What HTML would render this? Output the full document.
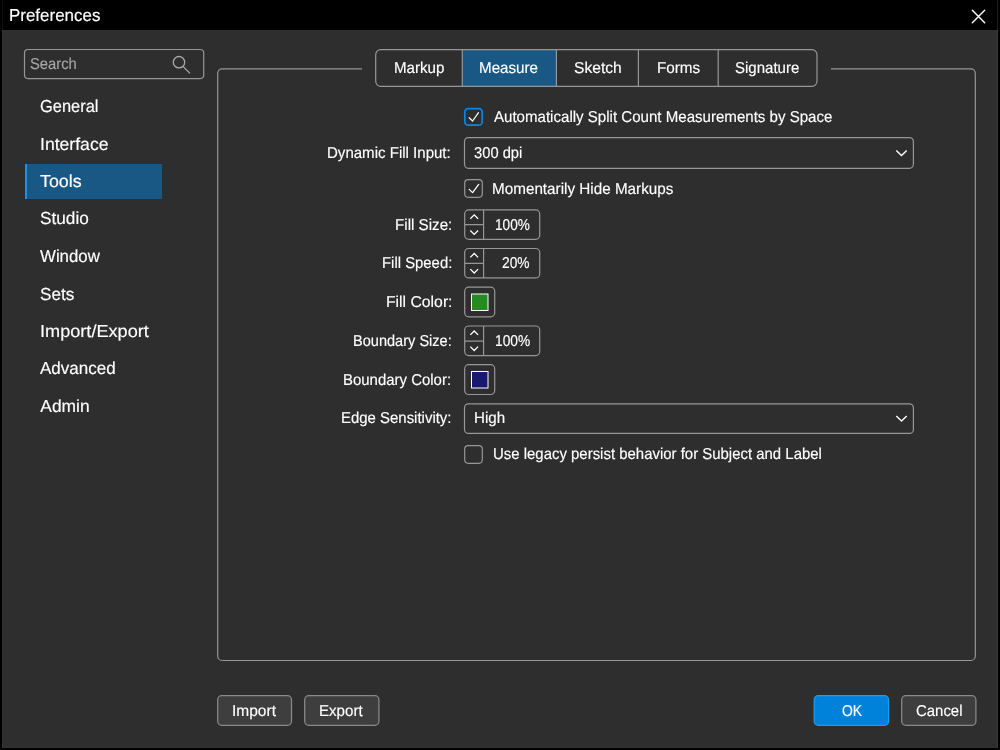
<!DOCTYPE html>
<html><head><meta charset="utf-8">
<style>
*{margin:0;padding:0;box-sizing:border-box}
html,body{width:1000px;height:750px;overflow:hidden;background:#000}
body{position:relative;font-family:"Liberation Sans",sans-serif}
.a{position:absolute}
.t{position:absolute;white-space:nowrap;line-height:1;transform-origin:0 0;filter:grayscale(1);text-rendering:geometricPrecision;-webkit-text-stroke:0.15px currentColor}
svg{position:absolute;left:0;top:0;overflow:visible}
</style></head><body>
<div class="a" style="left:2px;top:30px;width:996px;height:718px;background:#2e2e2e"></div>
<div class="a" style="left:997px;top:30px;width:1px;height:718px;background:#3a3a3a"></div>
<div class="a" style="left:997px;top:0;width:1px;height:30px;background:#1c1c1c"></div>
<div class="a" style="left:2px;top:0;width:1px;height:30px;background:#101010"></div>
<div class="a" style="left:2px;top:30px;width:1px;height:718px;background:#333"></div>
<div class="a" style="left:2px;top:747px;width:996px;height:1px;background:#333"></div>
<svg width="1000" height="750">
<g fill="none" stroke-linecap="round">
<path d="M972.3 10.3L984.7 22.7M984.7 10.3L972.3 22.7" stroke="#fff" stroke-width="1.4"/>
</g>
<g fill="none" stroke="#979797" stroke-width="1.2">
<!-- search -->
<rect x="24.5" y="49.5" width="179.2" height="29.1" rx="3.5"/>
<!-- group -->
<rect x="217.7" y="68.8" width="757.6" height="591.7" rx="4.5"/>
</g>
<rect x="362" y="66" width="469" height="5" fill="#2e2e2e"/>
<!-- search icon -->
<g fill="none" stroke="#a8a8a8" stroke-width="1.3">
<circle cx="179" cy="62.2" r="5.7"/>
<path d="M183.2 66.6L190 73.4"/>
</g>
<!-- nav highlight -->
<rect x="25" y="164" width="137" height="35" fill="#195784"/>
<rect x="25" y="164" width="2" height="35" fill="#1e90e6"/>
<!-- tabs -->
<rect x="462.5" y="49.5" width="94" height="37" fill="#195784"/>
<g fill="none" stroke="#979797" stroke-width="1.2">
<rect x="375.7" y="49.7" width="441.3" height="36.6" rx="5"/>
<path d="M462.3 49.7V86.3M556.4 49.7V86.3M638.4 49.7V86.3M718.2 49.7V86.3"/>
</g>
<!-- checkboxes -->
<rect x="464.8" y="108.7" width="17.4" height="16.5" rx="3.5" fill="none" stroke="#0d86e0" stroke-width="1.7"/>
<path d="M469.2 117.8L472.6 121L478.5 112.7" fill="none" stroke="#fff" stroke-width="1.25" stroke-linecap="round" stroke-linejoin="round"/>
<g fill="none" stroke="#979797" stroke-width="1.2">
<rect x="464.7" y="179.7" width="17.6" height="17.6" rx="3.5"/>
<rect x="464.7" y="445.7" width="17.6" height="17.6" rx="3.5"/>
</g>
<path d="M469.2 189.4L472.6 192.6L478.7 184.4" fill="none" stroke="#fff" stroke-width="1.25" stroke-linecap="round" stroke-linejoin="round"/>
<!-- dropdowns -->
<g fill="none" stroke="#979797" stroke-width="1.2">
<rect x="464.5" y="137.6" width="448.9" height="30.7" rx="4"/>
<rect x="464.5" y="403.8" width="448.9" height="29.6" rx="4"/>
</g>
<g fill="none" stroke="#fff" stroke-width="1.4" stroke-linecap="butt" stroke-linejoin="miter">
<path d="M896.3 150.6L901.5 155.6L906.7 150.6"/>
<path d="M896.3 416L901.5 421L906.7 416"/>
</g>
<!-- spinboxes -->
<g fill="none" stroke="#979797" stroke-width="1.2">
<rect x="464.7" y="209.9" width="75" height="29.4" rx="4"/>
<path d="M483.6 209.9V239.3M464.7 224.7H483.6"/>
<rect x="464.7" y="248.5" width="75" height="29.4" rx="4"/>
<path d="M483.6 248.5V277.9M464.7 263.3H483.6"/>
<rect x="464.7" y="326" width="75" height="29.6" rx="4"/>
<path d="M483.6 326V355.6M464.7 341.1H483.6"/>
</g>
<g fill="none" stroke="#fff" stroke-width="1.3" stroke-linecap="butt" stroke-linejoin="miter">
<path d="M470.3 218.8L474.2 214.9L478.1 218.8M470.3 230.5L474.2 234.4L478.1 230.5"/>
<path d="M470.3 257.4L474.2 253.5L478.1 257.4M470.3 269.1L474.2 273L478.1 269.1"/>
<path d="M470.3 334.9L474.2 331L478.1 334.9M470.3 346.6L474.2 350.5L478.1 346.6"/>
</g>
<!-- color boxes -->
<g fill="none" stroke="#979797" stroke-width="1.2">
<rect x="464.7" y="287.2" width="30" height="29.6" rx="4"/>
<rect x="464.7" y="364.7" width="30" height="29.8" rx="4"/>
</g>
<rect x="471.5" y="294" width="16.5" height="16.5" fill="#228b22" stroke="#fff" stroke-width="1"/>
<rect x="471.5" y="371.5" width="16.5" height="16.5" fill="#191970" stroke="#fff" stroke-width="1"/>
<!-- buttons -->
<g stroke-width="1.25">
<rect x="217.7" y="695.7" width="73.8" height="29.6" rx="4" fill="#3e3e3e" stroke="#8a8a8a"/>
<rect x="304.7" y="695.7" width="74.2" height="29.6" rx="4" fill="#3e3e3e" stroke="#8a8a8a"/>
<rect x="901.7" y="695.7" width="74.2" height="29.6" rx="4" fill="#3e3e3e" stroke="#8a8a8a"/>
<rect x="814.2" y="695.7" width="74.4" height="29.6" rx="4" fill="#0082da" stroke="#14a0fa"/>
</g>
</svg>

<div class="t" style="left:9.02px;top:7.00px;font-size:17.3px;color:#ffffff;transform:scaleX(0.9804)">Preferences</div>
<div class="t" style="left:30.46px;top:56.70px;font-size:15.8px;color:#a6a6a6;transform:scaleX(0.9354)">Search</div>
<div class="t" style="left:39.66px;top:98.00px;font-size:17.4px;color:#ffffff;transform:scaleX(0.9450)">General</div>
<div class="t" style="left:39.59px;top:136.00px;font-size:17.4px;color:#ffffff;transform:scaleX(1.0121)">Interface</div>
<div class="t" style="left:40.20px;top:172.80px;font-size:17.4px;color:#ffffff;transform:scaleX(1.0275)">Tools</div>
<div class="t" style="left:39.51px;top:210.00px;font-size:17.4px;color:#ffffff;transform:scaleX(0.9896)">Studio</div>
<div class="t" style="left:40.30px;top:247.60px;font-size:17.4px;color:#ffffff;transform:scaleX(0.9677)">Window</div>
<div class="t" style="left:39.92px;top:285.50px;font-size:17.4px;color:#ffffff;transform:scaleX(0.9848)">Sets</div>
<div class="t" style="left:39.76px;top:323.20px;font-size:17.4px;color:#ffffff;transform:scaleX(1.0427)">Import/Export</div>
<div class="t" style="left:40.20px;top:360.40px;font-size:17.4px;color:#ffffff;transform:scaleX(0.9776)">Advanced</div>
<div class="t" style="left:40.30px;top:397.60px;font-size:17.4px;color:#ffffff;transform:scaleX(1.0000)">Admin</div>
<div class="t" style="left:393.84px;top:60.90px;font-size:15.8px;color:#ffffff;transform:scaleX(0.9569)">Markup</div>
<div class="t" style="left:479.44px;top:61.00px;font-size:15.8px;color:#ffffff;transform:scaleX(0.9600)">Measure</div>
<div class="t" style="left:574.01px;top:61.00px;font-size:15.8px;color:#ffffff;transform:scaleX(0.9891)">Sketch</div>
<div class="t" style="left:656.53px;top:61.00px;font-size:15.8px;color:#ffffff;transform:scaleX(0.9651)">Forms</div>
<div class="t" style="left:735.05px;top:61.00px;font-size:15.8px;color:#ffffff;transform:scaleX(0.9508)">Signature</div>
<div class="t" style="left:493.70px;top:110.00px;font-size:15.8px;color:#ffffff;transform:scaleX(0.9540)">Automatically Split Count Measurements by Space</div>
<div class="t" style="left:492.43px;top:182.40px;font-size:15.8px;color:#ffffff;transform:scaleX(0.9656)">Momentarily Hide Markups</div>
<div class="t" style="left:492.80px;top:446.50px;font-size:15.8px;color:#ffffff;transform:scaleX(0.9458)">Use legacy persist behavior for Subject and Label</div>
<div class="t" style="left:327.45px;top:146.00px;font-size:15.8px;color:#ffffff;transform:scaleX(0.9523)">Dynamic Fill Input:</div>
<div class="t" style="left:394.64px;top:217.90px;font-size:15.8px;color:#ffffff;transform:scaleX(0.9596)">Fill Size:</div>
<div class="t" style="left:381.56px;top:255.70px;font-size:15.8px;color:#ffffff;transform:scaleX(0.9417)">Fill Speed:</div>
<div class="t" style="left:385.50px;top:294.90px;font-size:15.8px;color:#ffffff;transform:scaleX(0.9969)">Fill Color:</div>
<div class="t" style="left:352.58px;top:333.90px;font-size:15.8px;color:#ffffff;transform:scaleX(0.9219)">Boundary Size:</div>
<div class="t" style="left:343.35px;top:372.90px;font-size:15.8px;color:#ffffff;transform:scaleX(0.9464)">Boundary Color:</div>
<div class="t" style="left:340.55px;top:410.50px;font-size:15.8px;color:#ffffff;transform:scaleX(0.9461)">Edge Sensitivity:</div>
<div class="t" style="left:473.87px;top:145.90px;font-size:15.8px;color:#ffffff;transform:scaleX(0.9320)">300 dpi</div>
<div class="t" style="left:495.14px;top:217.90px;font-size:15.8px;color:#ffffff;transform:scaleX(0.8615)">100%</div>
<div class="t" style="left:502.43px;top:255.80px;font-size:15.8px;color:#ffffff;transform:scaleX(0.8700)">20%</div>
<div class="t" style="left:494.73px;top:333.90px;font-size:15.8px;color:#ffffff;transform:scaleX(0.8718)">100%</div>
<div class="t" style="left:473.94px;top:410.80px;font-size:15.8px;color:#ffffff;transform:scaleX(0.9581)">High</div>
<div class="t" style="left:231.52px;top:704.00px;font-size:15.8px;color:#ffffff;transform:scaleX(0.9818)">Import</div>
<div class="t" style="left:319.04px;top:704.00px;font-size:15.8px;color:#ffffff;transform:scaleX(0.9556)">Export</div>
<div class="t" style="left:841.72px;top:703.90px;font-size:15.8px;color:#ffffff;transform:scaleX(0.8810)">OK</div>
<div class="t" style="left:915.66px;top:703.90px;font-size:15.8px;color:#ffffff;transform:scaleX(0.9447)">Cancel</div>
</body></html>
